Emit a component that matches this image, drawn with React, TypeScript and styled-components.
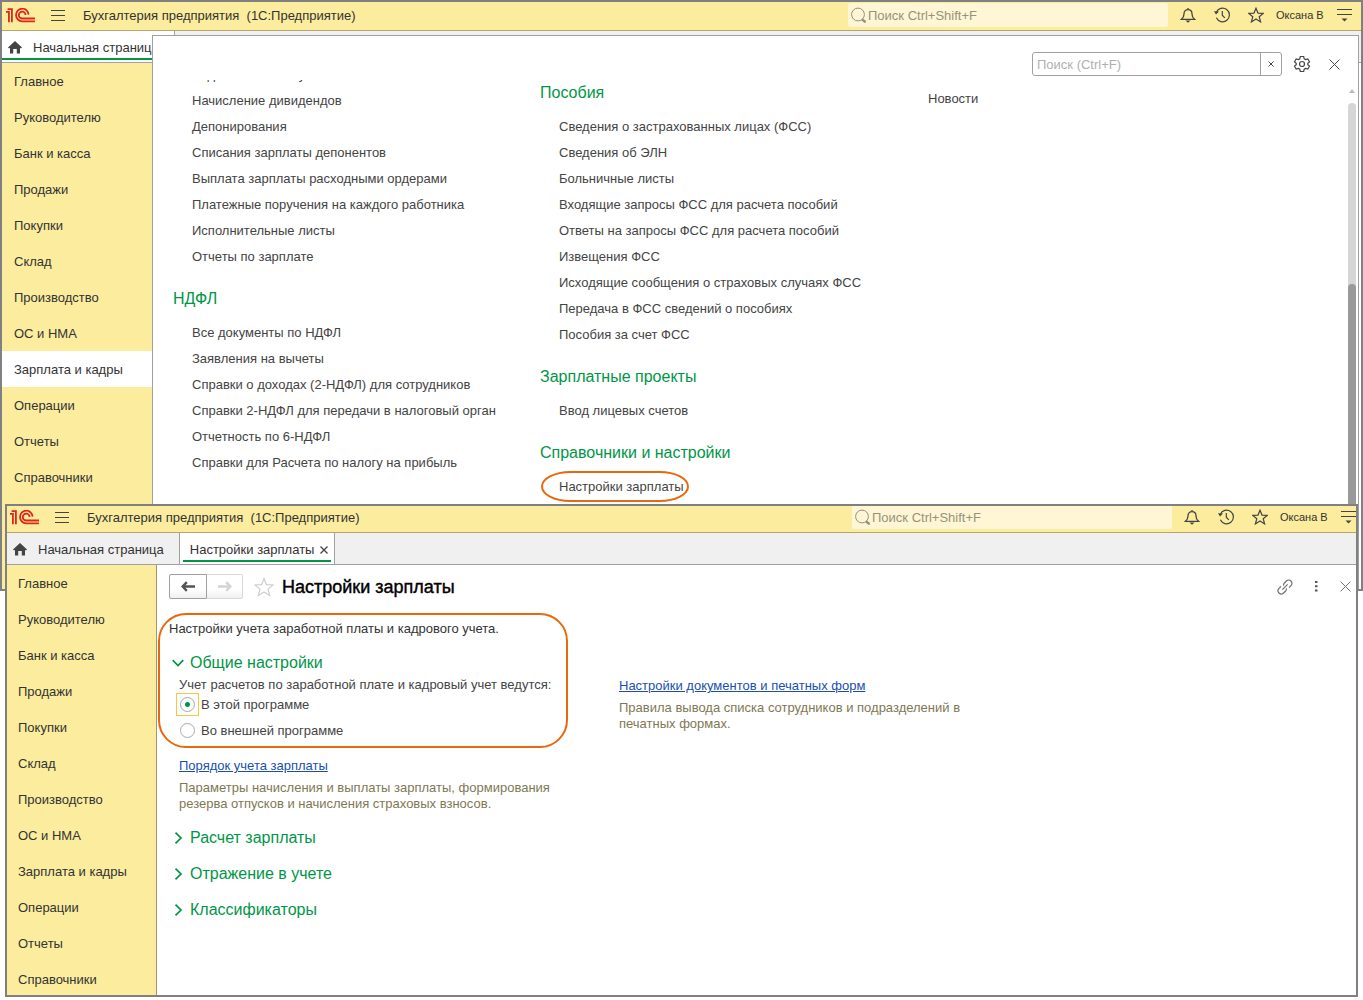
import React from 'react';
import styled, { createGlobalStyle, css } from 'styled-components';

const GlobalStyle = createGlobalStyle`
  *, *::before, *::after { box-sizing: border-box; }
  body {
    margin: 0;
    background: #fff;
    color: #333;
    font: 13px/16px "Liberation Sans", Arial, sans-serif;
  }
  button, input { font: inherit; color: inherit; }
  ul { list-style: none; margin: 0; padding: 0; }
  a { color: inherit; text-decoration: none; }
  svg { display: block; flex: none; }
`;

const GREEN = '#009646';
const YELLOW = '#fbec9e';
const LINE = '#a0a0a0';
const ORANGE = '#e8690b';

const Desktop = styled.div`
  position: relative;
  display: flex;
  flex-direction: column;
  height: 100vh;
  min-height: 900px;
  overflow: hidden;
`;

const Frame = styled.section<{ $front?: boolean }>`
  display: flex;
  flex-direction: column;
  border: 2px solid #808080;
  background: #fff;
  overflow: hidden;
  ${(p) =>
    p.$front
      ? css`
          position: relative;
          flex: 1;
          min-height: 0;
          margin: 504px 5px 3px;
        `
      : css`
          position: absolute;
          top: 0;
          left: 0;
          right: 0;
          height: 591px;
        `}
`;

const TitleBar = styled.header<{ $front?: boolean }>`
  flex: none;
  display: flex;
  align-items: flex-end;
  height: ${(p) => (p.$front ? 27 : 29)}px;
  padding: 0 ${(p) => (p.$front ? 0 : 9)}px 3px ${(p) => (p.$front ? 3 : 4)}px;
  border-bottom: 1px solid #b5a76c;
  background: ${YELLOW};
  overflow: hidden;
`;

const BarGroup = styled.div<{ $gap: number }>`
  display: flex;
  align-items: center;
  height: 24px;
  gap: ${(p) => p.$gap}px;
`;

const BarIcons = styled.div`
  display: flex;
  gap: 18px;
  margin-left: 12px;
`;

const IconButton = styled.button`
  display: flex;
  align-items: center;
  justify-content: center;
  padding: 0;
  border: 0;
  background: none;
  color: #444;
`;

const AppTitle = styled.span`
  margin-left: 2px;
  padding-top: 2px;
  white-space: pre;
`;

const GlobalSearch = styled.label`
  display: flex;
  align-items: center;
  width: 320px;
  height: 24px;
  margin-left: auto;
  padding-left: 2px;
  border-radius: 2px;
  background: #fef6d5;
  color: #98927c;
`;

const PlainInput = styled.input`
  flex: 1;
  min-width: 0;
  height: 22px;
  padding: 0 0 0 1px;
  border: 0;
  outline: 0;
  background: none;
  &::placeholder { color: #98927c; opacity: 1; }
`;

const UserName = styled.span`
  width: 47px;
  margin: 0 14px 0 12px;
  font-size: 11px;
  white-space: nowrap;
`;

const TabStrip = styled.nav`
  flex: none;
  display: flex;
  height: 32px;
  border-bottom: 1px solid ${LINE};
  background: #f0f0f0;
`;

const Tab = styled.div<{ $active?: boolean; $home?: boolean }>`
  position: relative;
  display: flex;
  align-items: center;
  gap: ${(p) => (p.$home ? 11 : 6)}px;
  padding: 2px ${(p) => (p.$home ? 15 : 6)}px 0 ${(p) => (p.$home ? 6 : 10)}px;
  border-right: 1px solid ${LINE};
  background: ${(p) => (p.$active ? '#fff' : 'transparent')};
  white-space: nowrap;
  &::after {
    content: '';
    display: ${(p) => (p.$active ? 'block' : 'none')};
    position: absolute;
    left: ${(p) => (p.$home ? 0 : 3)}px;
    right: 3px;
    bottom: 2px;
    height: 2px;
    background: ${GREEN};
  }
`;

const Workspace = styled.div`
  flex: 1;
  display: flex;
  min-height: 0;
`;

const SideNav = styled.nav<{ $front?: boolean }>`
  flex: none;
  width: ${(p) => (p.$front ? 150 : 151)}px;
  border-right: 1px solid #a0986c;
  background: ${YELLOW};
  overflow: hidden;
`;

const SideLink = styled.a<{ $front?: boolean; $active?: boolean }>`
  display: flex;
  align-items: center;
  height: 36px;
  padding: 2px 0 0 ${(p) => (p.$front ? 11 : 12)}px;
  background: ${(p) => (p.$active ? '#fff' : 'transparent')};
`;

const MenuPanel = styled.div`
  position: absolute;
  top: 33px;
  left: 150px;
  right: 2px;
  bottom: 0;
  display: flex;
  flex-direction: column;
  border: 1px solid ${LINE};
  border-bottom: 0;
  background: #fff;
`;

const PanelHead = styled.div`
  flex: none;
  display: flex;
  align-items: center;
  justify-content: flex-end;
  height: 44px;
  padding: 12px 18px 0 0;
`;

const PanelSearch = styled.div`
  display: flex;
  width: 250px;
  height: 24px;
  margin-right: 11px;
  border: 1px solid ${LINE};
  border-radius: 3px;
  input { padding-left: 4px; }
  input::placeholder { color: #b0b0b0; }
  button { width: 21px; border-left: 1px solid ${LINE}; }
`;

const PanelBody = styled.div`
  flex: 1;
  display: flex;
  min-height: 0;
  overflow: hidden;
`;

const MenuColumns = styled.div`
  flex: 1;
  display: grid;
  grid-template-columns: 367px 388px 1fr;
  padding-left: 20px;
`;

const MenuColumn = styled.div<{ $shift: number }>`
  margin-top: ${(p) => p.$shift}px;
`;

const MenuHeading = styled.h2`
  height: 37px;
  margin: 0;
  padding-top: 6px;
  color: ${GREEN};
  font-size: 16px;
  font-weight: 400;
  line-height: 20px;
`;

const MenuList = styled.ul`
  padding: 0 0 13px 19px;
  color: #444;
`;

const MenuItem = styled.li`
  display: flex;
  align-items: center;
  height: 26px;
  color: #444;
  white-space: nowrap;
`;

const Circled = styled.span`
  position: relative;
  &::after {
    content: '';
    position: absolute;
    inset: -8px -5px -7px -18px;
    border: 2px solid ${ORANGE};
    border-radius: 30px / 16px;
  }
`;

const ScrollBar = styled.div`
  display: flex;
  flex-direction: column;
  align-items: center;
  width: 8px;
  margin: 9px 2px 0 0;
`;

const ScrollArrow = styled.span`
  border: 3px solid transparent;
  border-top: 0;
  border-bottom: 4px solid #bcbcbc;
`;

const ScrollTrack = styled.div`
  flex: 1;
  width: 8px;
  margin-top: 10px;
  padding-top: 181px;
  border-radius: 4px 4px 0 0;
  background: #d6d6d6;
`;

const ScrollThumb = styled.div`
  height: 100%;
  border-radius: 4px 4px 0 0;
  background: #9a9a9a;
`;

const Page = styled.main`
  flex: 1;
  min-width: 0;
  padding: 9px 5px 0 12px;
`;

const PageHead = styled.div`
  display: flex;
  align-items: center;
  height: 25px;
`;

const ArrowPair = styled.div`
  display: flex;
  height: 25px;
`;

const ArrowButton = styled.button<{ $off?: boolean }>`
  display: flex;
  align-items: center;
  justify-content: center;
  width: ${(p) => (p.$off ? 36 : 38)}px;
  padding: 0;
  border: 1px solid ${(p) => (p.$off ? '#d8d8d8' : '#a0a0a0')};
  border-left-width: ${(p) => (p.$off ? 0 : 1)}px;
  border-radius: ${(p) => (p.$off ? '0 2px 2px 0' : '2px 0 0 2px')};
  background: linear-gradient(#fff 60%, #f0f0f0);
  color: ${(p) => (p.$off ? '#d4d4d4' : '#555')};
`;

const FavoriteButton = styled(IconButton)`
  margin-left: 11px;
  color: #ccc;
`;

const PageTitle = styled.h1`
  margin: 0 auto 0 8px;
  color: #000;
  font-size: 18px;
  font-weight: 400;
  line-height: 24px;
  -webkit-text-stroke: 0.4px #000;
`;

const HeadTools = styled.div`
  display: flex;
  align-items: center;
  gap: 18px;
`;

const PageTools = styled(HeadTools)`
  gap: 22px;
  button { color: #707070; }
`;

const Columns = styled.div`
  display: grid;
  grid-template-columns: 450px minmax(0, 385px);
`;

const Highlighted = styled.div`
  position: relative;
  width: 410px;
  padding-top: 22px;
  &::after {
    content: '';
    position: absolute;
    inset: 14px 11px -3px -11px;
    border: 2px solid ${ORANGE};
    border-radius: 28px;
    pointer-events: none;
  }
`;

const Intro = styled.p`
  margin: 0 0 16px;
`;

const Group = styled.button`
  display: flex;
  align-items: center;
  gap: 6px;
  height: 20px;
  padding: 0 0 0 3px;
  border: 0;
  background: none;
  color: ${GREEN};
  font-size: 16px;
  line-height: 20px;
`;

const RadioSet = styled.fieldset`
  margin: 0;
  padding: 4px 0 0;
  border: 0;
  color: #444;
`;

const Legend = styled.legend`
  float: left;
  width: 100%;
  padding: 0 0 0 10px;
  white-space: nowrap;
`;

const RadioLabel = styled.label`
  clear: both;
  display: flex;
  align-items: center;
  gap: 2px;
  height: 23px;
  margin: 0 0 3px 7px;
`;

const RadioBox = styled.span<{ $focus?: boolean }>`
  display: flex;
  padding: 3px;
  border: 1px solid ${(p) => (p.$focus ? '#f8c73b' : 'transparent')};
`;

const Radio = styled.input`
  appearance: none;
  width: 15px;
  height: 15px;
  margin: 0;
  border: 1px solid #a8a8a8;
  border-radius: 50%;
  background: #fff;
  &:checked { background: radial-gradient(circle, ${GREEN} 2px, #fff 3px); }
`;

const LinkBlock = styled.div<{ $top: number; $inset?: number }>`
  padding: ${(p) => p.$top}px 0 0 ${(p) => p.$inset ?? 0}px;
`;

const TextLink = styled.a`
  color: #1a4fad;
  text-decoration: underline;
`;

const Hint = styled.p`
  max-width: 385px;
  margin: 6px 0 0;
  color: #7f7854;
`;

const GroupList = styled.div`
  display: flex;
  flex-direction: column;
  gap: 16px;
  padding-top: 16px;
`;

const Stroke = ({ w, h = w, d, sw = 1, children }: { w: number; h?: number; d?: string; sw?: number; children?: React.ReactNode }) => (
  <svg width={w} height={h} viewBox={`0 0 ${w} ${h}`} fill="none" stroke="currentColor" strokeWidth={sw} aria-hidden="true">
    {d && <path d={d} />}
    {children}
  </svg>
);

const Logo = () => (
  <svg width="29" height="15" viewBox="0 0 29 15" fill="none" stroke="#e0251b" strokeWidth="1.8" aria-label="1C">
    <path d="M0 3.9H2.9V14.2M1.6 1.2H5.9V14.2" />
    <path d="M22.6 6.6A6.3 6.3 0 1 0 16.3 13.3H29M19.6 7A3.4 3.4 0 1 0 16.3 10.5H29" />
  </svg>
);
const Burger = () => <Stroke w={14} h={13} d="M0 1.5H14M0 6.5H14M0 11.5H14" />;
const Magnifier = () => (
  <Stroke w={17} d="M12 12L16 15.5">
    <circle cx="8" cy="7.5" r="6.4" />
    <path d="M12 12.5L15.5 15" strokeWidth="2.4" />
  </Stroke>
);
const Bell = () => (
  <Stroke w={16} sw={1.3} d="M8 1V2.6M1.5 12.3H14.5C12.6 10.6 12 9.5 12 7 12 4.4 10.6 2.7 8 2.7S4 4.4 4 7C4 9.5 3.4 10.6 1.5 12.3Z">
    <path d="M5.4 13.6H10.6L8 15.8Z" fill="currentColor" stroke="none" />
  </Stroke>
);
const History = () => (
  <Stroke w={16} sw={1.2} d="M2.3 5.4A6.8 6.8 0 1 1 2.4 10.8M8.3 4V8.2L10.8 10.8">
    <path d="M0 4.2L5 4.6 2 7.6Z" fill="currentColor" stroke="none" />
  </Stroke>
);
const Star = ({ size = 16, sw = 1.2 }: { size?: number; sw?: number }) => (
  <svg width={size} height={size} viewBox="0 0 16 16" fill="none" stroke="currentColor" strokeWidth={sw} aria-hidden="true">
    <path d="M8 1.2L10 6.1 15.2 6.4 11.2 9.7 12.6 14.9 8 12 3.4 14.9 4.8 9.7 .8 6.4 6 6.1Z" />
  </svg>
);
const ServiceMenu = () => (
  <Stroke w={15} h={14} d="M0 1.5H15M0 6.5H15" sw={1.2}>
    <path d="M4.5 10.5H10.5L7.5 13.5Z" fill="currentColor" stroke="none" />
  </Stroke>
);
const Home = () => (
  <svg width="14" height="13" viewBox="0 0 14 13" fill="#444" aria-hidden="true">
    <path d="M7 0L14 6.6 13 7.5 12 6.8V12.5H8.8V8H5.2V12.5H2V6.8L1 7.5 0 6.6Z" />
  </svg>
);
const Cross = ({ size, sw = 1 }: { size: number; sw?: number }) => (
  <Stroke w={size} sw={sw} d={`M.5 .5L${size - 0.5} ${size - 0.5}M${size - 0.5} .5L.5 ${size - 0.5}`} />
);
const Gear = () => (
  <Stroke w={18} sw={1.2} d="M7.3 1.5H10.7L11.2 3.8 12.6 4.6 14.8 3.9 16.5 6.8 14.8 8.3V9.7L16.5 11.2 14.8 14.1 12.6 13.4 11.2 14.2 10.7 16.5H7.3L6.8 14.2 5.4 13.4 3.2 14.1 1.5 11.2 3.2 9.7V8.3L1.5 6.8 3.2 3.9 5.4 4.6 6.8 3.8Z">
    <circle cx="9" cy="9" r="2.5" />
  </Stroke>
);
const Arrow = ({ back }: { back?: boolean }) => (
  <Stroke w={14} h={11} sw={2.4} d={back ? 'M2 5.5H14M5.8 1.2L1.7 5.5 5.8 9.8' : 'M0 5.5H12M8.2 1.2L12.3 5.5 8.2 9.8'} />
);
const Chain = () => (
  <Stroke w={16} sw={1.2} d="M7.4 4L9.4 2A3.2 3.2 0 0 1 14 6.6L12 8.6M8.6 12L6.6 14A3.2 3.2 0 0 1 2 9.4L4 7.4M5.4 10.6L10.6 5.4M7.4 4A3.2 3.2 0 0 0 6.6 6.6M8.6 12A3.2 3.2 0 0 0 9.4 9.4" />
);
const Dots = () => (
  <svg width="3" height="11" viewBox="0 0 3 11" fill="#555" aria-hidden="true">
    <path d="M0 0H2.5V2H0ZM0 4.3H2.5V6.3H0ZM0 8.6H2.5V10.6H0Z" />
  </svg>
);
const Chevron = ({ open }: { open?: boolean }) => (
  <Stroke w={12} sw={1.7} d={open ? 'M.7 3.2L6 8.5 11.3 3.2' : 'M3.5 .7L9 6 3.5 11.3'} />
);

const SECTIONS = [
  'Главное', 'Руководителю', 'Банк и касса', 'Продажи', 'Покупки', 'Склад',
  'Производство', 'ОС и НМА', 'Зарплата и кадры', 'Операции', 'Отчеты', 'Справочники',
];

const PAYROLL = [
  'Ведомости в кассу', 'Начисление дивидендов', 'Депонирования', 'Списания зарплаты депонентов',
  'Выплата зарплаты расходными ордерами', 'Платежные поручения на каждого работника',
  'Исполнительные листы', 'Отчеты по зарплате',
];

const NDFL = [
  'Все документы по НДФЛ', 'Заявления на вычеты', 'Справки о доходах (2-НДФЛ) для сотрудников',
  'Справки 2-НДФЛ для передачи в налоговый орган', 'Отчетность по 6-НДФЛ',
  'Справки для Расчета по налогу на прибыль',
];

const BENEFITS = [
  'Сведения о застрахованных лицах (ФСС)', 'Сведения об ЭЛН', 'Больничные листы',
  'Входящие запросы ФСС для расчета пособий', 'Ответы на запросы ФСС для расчета пособий',
  'Извещения ФСС', 'Исходящие сообщения о страховых случаях ФСС',
  'Передача в ФСС сведений о пособиях', 'Пособия за счет ФСС',
];

function Menu({ items, circled }: { items: string[]; circled?: boolean }) {
  return (
    <MenuList>
      {items.map((item) => (
        <MenuItem key={item}>
          {circled ? <Circled><a href="#settings">{item}</a></Circled> : <a href="#item">{item}</a>}
        </MenuItem>
      ))}
    </MenuList>
  );
}

function AppBar({ front }: { front?: boolean }) {
  return (
    <TitleBar $front={front}>
      <BarGroup $gap={16}>
        <Logo />
        <IconButton aria-label="Меню"><Burger /></IconButton>
        <AppTitle>{'Бухгалтерия предприятия  (1С:Предприятие)'}</AppTitle>
      </BarGroup>
      <GlobalSearch>
        <Magnifier />
        <PlainInput aria-label="Поиск" placeholder="Поиск Ctrl+Shift+F" />
      </GlobalSearch>
      <BarGroup $gap={0}>
        <BarIcons>
          <IconButton aria-label="Уведомления"><Bell /></IconButton>
          <IconButton aria-label="История"><History /></IconButton>
          <IconButton aria-label="Избранное"><Star /></IconButton>
        </BarIcons>
        <UserName>Оксана В</UserName>
        <IconButton aria-label="Сервис"><ServiceMenu /></IconButton>
      </BarGroup>
    </TitleBar>
  );
}

function Sections({ front, active }: { front?: boolean; active?: string }) {
  return (
    <SideNav $front={front}>
      {SECTIONS.map((name) => (
        <SideLink key={name} href="#section" $front={front} $active={name === active}>{name}</SideLink>
      ))}
    </SideNav>
  );
}

export default function App() {
  return (
    <Desktop>
      <GlobalStyle />
      <Frame>
        <AppBar />
        <TabStrip>
          <Tab $home $active><Home /><a href="#home">Начальная страница</a></Tab>
        </TabStrip>
        <Workspace>
          <Sections active="Зарплата и кадры" />
        </Workspace>
        <MenuPanel>
          <PanelHead>
            <PanelSearch>
              <PlainInput aria-label="Поиск в меню" placeholder="Поиск (Ctrl+F)" />
              <IconButton aria-label="Очистить"><Cross size={6} /></IconButton>
            </PanelSearch>
            <HeadTools>
              <IconButton aria-label="Настройка"><Gear /></IconButton>
              <IconButton aria-label="Закрыть"><Cross size={11} /></IconButton>
            </HeadTools>
          </PanelHead>
          <PanelBody>
            <MenuColumns>
              <MenuColumn $shift={-18}>
                <Menu items={PAYROLL} />
                <MenuHeading>НДФЛ</MenuHeading>
                <Menu items={NDFL} />
              </MenuColumn>
              <MenuColumn $shift={-3}>
                <MenuHeading>Пособия</MenuHeading>
                <Menu items={BENEFITS} />
                <MenuHeading>Зарплатные проекты</MenuHeading>
                <Menu items={['Ввод лицевых счетов']} />
                <MenuHeading>Справочники и настройки</MenuHeading>
                <Menu items={['Настройки зарплаты']} circled />
              </MenuColumn>
              <MenuColumn $shift={6}>
                <MenuItem as="div"><a href="#news">Новости</a></MenuItem>
              </MenuColumn>
            </MenuColumns>
            <ScrollBar>
              <ScrollArrow />
              <ScrollTrack><ScrollThumb /></ScrollTrack>
            </ScrollBar>
          </PanelBody>
        </MenuPanel>
      </Frame>

      <Frame $front>
        <AppBar front />
        <TabStrip>
          <Tab $home><Home /><a href="#home">Начальная страница</a></Tab>
          <Tab $active>
            <a href="#settings">Настройки зарплаты</a>
            <IconButton aria-label="Закрыть вкладку"><Cross size={8} sw={1.3} /></IconButton>
          </Tab>
        </TabStrip>
        <Workspace>
          <Sections front />
          <Page>
            <PageHead>
              <ArrowPair>
                <ArrowButton aria-label="Назад"><Arrow back /></ArrowButton>
                <ArrowButton aria-label="Вперед" $off><Arrow /></ArrowButton>
              </ArrowPair>
              <FavoriteButton aria-label="В избранное"><Star size={20} sw={0.9} /></FavoriteButton>
              <PageTitle>Настройки зарплаты</PageTitle>
              <PageTools>
                <IconButton aria-label="Ссылка"><Chain /></IconButton>
                <IconButton aria-label="Еще"><Dots /></IconButton>
                <IconButton aria-label="Закрыть"><Cross size={11} /></IconButton>
              </PageTools>
            </PageHead>
            <Columns>
              <div>
                <Highlighted>
                  <Intro>Настройки учета заработной платы и кадрового учета.</Intro>
                  <Group><Chevron open />Общие настройки</Group>
                  <RadioSet>
                    <Legend>Учет расчетов по заработной плате и кадровый учет ведутся:</Legend>
                    <RadioLabel>
                      <RadioBox $focus><Radio type="radio" name="accounting" defaultChecked /></RadioBox>
                      В этой программе
                    </RadioLabel>
                    <RadioLabel>
                      <RadioBox><Radio type="radio" name="accounting" /></RadioBox>
                      Во внешней программе
                    </RadioLabel>
                  </RadioSet>
                </Highlighted>
                <LinkBlock $top={13} $inset={10}>
                  <TextLink href="#order">Порядок учета зарплаты</TextLink>
                  <Hint>Параметры начисления и выплаты зарплаты, формирования резерва отпусков и начисления страховых взносов.</Hint>
                </LinkBlock>
                <GroupList>
                  <Group><Chevron />Расчет зарплаты</Group>
                  <Group><Chevron />Отражение в учете</Group>
                  <Group><Chevron />Классификаторы</Group>
                </GroupList>
              </div>
              <LinkBlock $top={79}>
                <TextLink href="#forms">Настройки документов и печатных форм</TextLink>
                <Hint>Правила вывода списка сотрудников и подразделений в печатных формах.</Hint>
              </LinkBlock>
            </Columns>
          </Page>
        </Workspace>
      </Frame>
    </Desktop>
  );
}
